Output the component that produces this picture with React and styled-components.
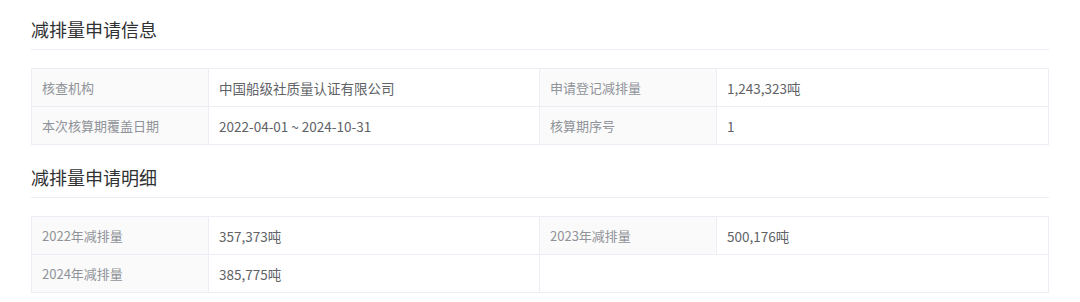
import React from "react";
import styled, { createGlobalStyle } from "styled-components";

const GlobalStyle = createGlobalStyle`
    body {
        margin: 0;
        background: #fff;
        font-family: "Noto Sans CJK SC", "Noto Sans", sans-serif;
    }
`;

const infoRows = [
    [
        { label: "核查机构", value: "中国船级社质量认证有限公司" },
        { label: "申请登记减排量", value: "1,243,323吨" },
    ],
    [
        { label: "本次核算期覆盖日期", value: "2022-04-01 ~ 2024-10-31" },
        { label: "核算期序号", value: "1" },
    ],
];

const detailRows = [
    [
        { label: "2022年减排量", value: "357,373吨" },
        { label: "2023年减排量", value: "500,176吨" },
    ],
    [
        { label: "2024年减排量", value: "385,775吨" },
        { label: "", value: "", empty: true },
    ],
];

const InfoTable = ({ rows }) => (
    <Table>
        <colgroup>
            <col style={{ width: 177 }} />
            <col style={{ width: 331 }} />
            <col style={{ width: 177 }} />
            <col />
        </colgroup>
        <tbody>
            {rows.map((row, i) => (
                <tr key={i}>
                    {row.map((cell, j) =>
                        cell.empty ? (
                            <ValueCell key={j} colSpan={2} $blank />
                        ) : (
                            <React.Fragment key={j}>
                                <LabelCell>{cell.label}</LabelCell>
                                <ValueCell>{cell.value}</ValueCell>
                            </React.Fragment>
                        )
                    )}
                </tr>
            ))}
        </tbody>
    </Table>
);

const App = () => {
    return (
        <Page>
            <GlobalStyle />
            <Section>
                <Title>减排量申请信息</Title>
                <InfoTable rows={infoRows} />
            </Section>
            <Section>
                <Title>减排量申请明细</Title>
                <InfoTable rows={detailRows} />
            </Section>
        </Page>
    );
};

const Page = styled.div`
    padding: 9px 31px 0 31px;
    display: flex;
    flex-direction: column;
    gap: 12px;
`;

const Section = styled.div`
    display: flex;
    flex-direction: column;
`;

const Title = styled.div`
    height: 40px;
    line-height: 40px;
    font-size: 18px;
    color: #303133;
    border-bottom: 1px solid #ebeef5;
    margin-bottom: 18px;
`;

const Table = styled.table`
    width: 100%;
    border-collapse: collapse;
    table-layout: fixed;
    border: 1px solid #ebeef5;
`;

const LabelCell = styled.td`
    height: 38px;
    padding: 0 10px;
    box-sizing: border-box;
    background: #fafafa;
    color: #909399;
    font-size: 13px;
    border: 1px solid #ebeef5;
    white-space: nowrap;
`;

const ValueCell = styled.td`
    height: 38px;
    padding: 0 10px;
    box-sizing: border-box;
    background: #fff;
    color: #606266;
    font-size: 13.5px;
    border: 1px solid #ebeef5;
    ${(p) => p.$blank && "border-left: none;"}
    white-space: nowrap;
`;

export default App;
